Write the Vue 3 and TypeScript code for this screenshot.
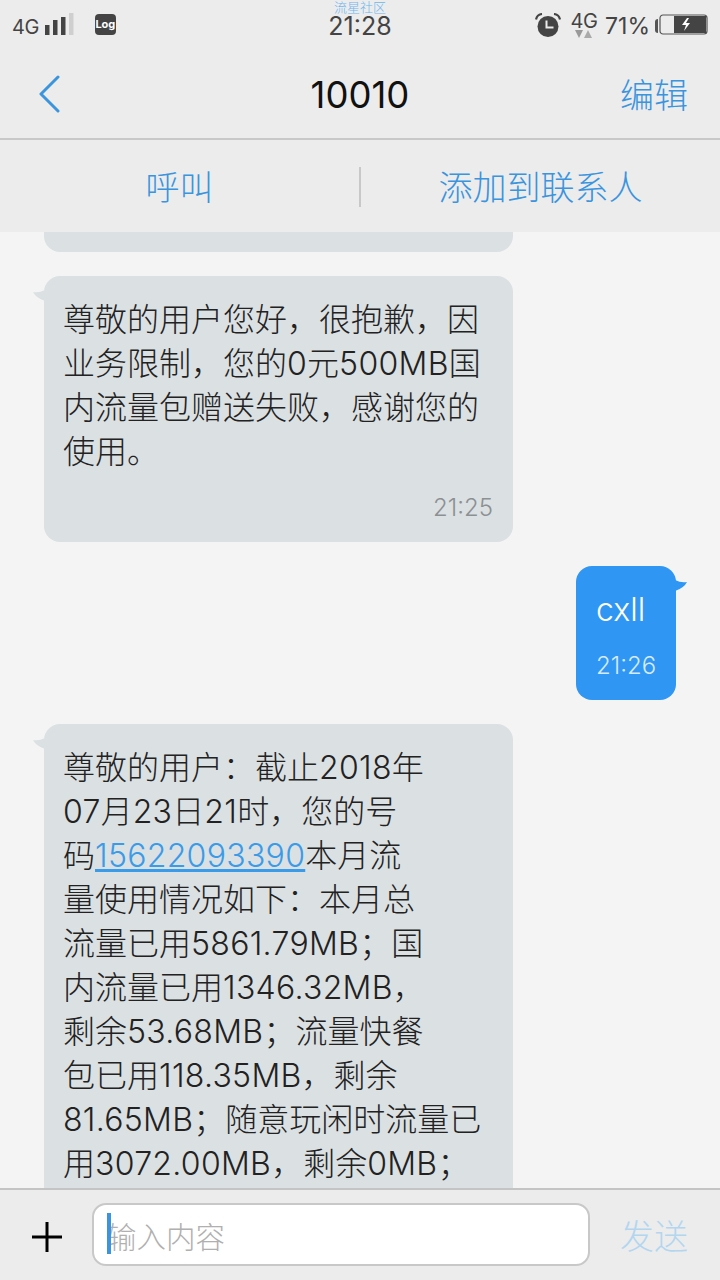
<template>
  <div class="phone">
    <!-- Status bar -->
    <div class="status">
      <div class="status-left">
        <span class="net">4G</span>
        <svg class="signal" width="30" height="24" viewBox="0 0 30 24">
          <rect x="0" y="12" width="4.5" height="10" fill="#444" />
          <rect x="8" y="7" width="4.5" height="15" fill="#444" />
          <rect x="16" y="4" width="4.5" height="18" fill="#444" />
          <rect x="24" y="0" width="4.5" height="22" fill="#cfcfcf" />
        </svg>
        <span class="log">Log</span>
      </div>
      <div class="status-center">
        <span class="carrier">流星社区</span>
        <span class="clock">21:28</span>
      </div>
      <div class="status-right">
        <svg class="alarm" width="26" height="24" viewBox="0 0 26 24">
          <circle cx="13" cy="13.5" r="10.5" fill="#444" />
          <path d="M11.5 7.5v7h7" fill="none" stroke="#ececec" stroke-width="2" />
          <path d="M1 6.5 Q2 1.5 7 1 M25 6.5 Q24 1.5 19 1" fill="none" stroke="#444" stroke-width="2.2" />
        </svg>
        <div class="net-updown">
          <span class="net2">4G</span>
          <svg class="updown" width="20" height="9" viewBox="0 0 20 9">
            <path d="M1 0h8l-4 8z" fill="#999" />
            <path d="M10 8h8l-4-8z" fill="#aaa" />
          </svg>
        </div>
        <span class="pct">71%</span>
        <span class="pct-cut"></span>
        <svg class="battery" width="49" height="21" viewBox="0 0 49 21">
          <rect x="1" y="1" width="47" height="19" rx="3" fill="none" stroke="#555" stroke-width="1.2" />
          <rect x="15" y="2" width="32" height="17" fill="#444" />
          <path d="M28 4l-5 7h4l-2 6 6-8h-4l3-5z" fill="#fff" />
        </svg>
      </div>
    </div>

    <!-- Header -->
    <header class="header">
      <svg class="back" width="24" height="38" viewBox="0 0 24 38">
        <path d="M20 2 L3 19 L20 36" fill="none" stroke="#3a94de" stroke-width="3" stroke-linecap="round" stroke-linejoin="round" />
      </svg>
      <span class="title">10010</span>
      <span class="edit">编辑</span>
    </header>

    <!-- Actions -->
    <div class="actions">
      <span class="action">呼叫</span>
      <span class="sep"></span>
      <span class="action">添加到联系人</span>
    </div>

    <!-- Messages -->
    <main class="messages">
      <div class="bubble cut-top"></div>

      <div class="bubble in first">
        <svg class="tail tail-in" width="12" height="11" viewBox="0 0 12 11">
          <path d="M12 0 Q6 3 0 2 Q3 8 12 11z" fill="#dbe0e3" />
        </svg>
        <p class="body">尊敬的用户您好，很抱歉，因<br />业务限制，您的<span class="lat">0</span>元<span class="lat">500MB</span>国<br />内流量包赠送失败，感谢您的<br />使用。</p>
        <div class="time">21:25</div>
      </div>

      <div class="bubble out">
        <svg class="tail tail-out" width="12" height="11" viewBox="0 0 12 11">
          <path d="M0 0 Q6 3 12 2 Q9 8 0 11z" fill="#2f96f3" />
        </svg>
        <p class="body">cxll</p>
        <div class="time">21:26</div>
      </div>

      <div class="bubble in long">
        <svg class="tail tail-in" width="12" height="11" viewBox="0 0 12 11">
          <path d="M12 0 Q6 3 0 2 Q3 8 12 11z" fill="#dbe0e3" />
        </svg>
        <p class="body">尊敬的用户：截止<span class="lat">2018</span>年<br /><span class="lat">07</span>月<span class="lat">23</span>日<span class="lat">21</span>时，您的号<br />码<span class="link lat">15622093390</span>本月流<br />量使用情况如下：本月总<br />流量已用<span class="lat">5861.79MB</span>；国<br />内流量已用<span class="lat">1346.32MB</span>，<br />剩余<span class="lat">53.68MB</span>；流量快餐<br />包已用<span class="lat">118.35MB</span>，剩余<br /><span class="lat">81.65MB</span>；随意玩闲时流量已<br />用<span class="lat">3072.00MB</span>，剩余<span class="lat">0MB</span>；</p>
      </div>
    </main>

    <!-- Input -->
    <footer class="footer">
      <svg class="plus" width="30" height="30" viewBox="0 0 30 30">
        <path d="M0 15h30M15 0v30" stroke="#000" stroke-width="3" />
      </svg>
      <div class="input">
        <span class="caret"></span>
        <span class="placeholder">输入内容</span>
      </div>
      <span class="send">发送</span>
    </footer>
  </div>
</template>

<script setup lang="ts">
</script>

<style>
html, body { margin: 0; background: #f4f4f4; }
</style>

<style scoped>
.phone {
  width: 720px;
  height: 1280px;
  overflow: hidden;
  display: flex;
  flex-direction: column;
  background: #f4f4f4;
  font-family: "Inter", "Noto Sans CJK SC", sans-serif;
  font-weight: 300;
}

.status {
  height: 50px;
  flex: none;
  display: flex;
  justify-content: space-between;
  background: #ececec;
  color: #444;
  position: relative;
}
.status-left {
  display: flex;
  align-items: flex-start;
  padding: 14px 0 0 12px;
}
.net { font-size: 20px; line-height: 26px; letter-spacing: -0.5px; font-weight: 400; }
.signal { margin: -1px 0 0 6px; }
.log {
  width: 21px;
  height: 21px;
  margin: 0 0 0 20px;
  border-radius: 4px;
  background: #444;
  color: #fff;
  font-size: 11px;
  font-weight: 700;
  line-height: 21px;
  text-align: center;
}
.status-center {
  position: absolute;
  left: 0;
  right: 0;
  top: 0;
  display: flex;
  flex-direction: column;
  align-items: center;
}
.carrier { font-size: 13px; line-height: 14px; color: #6db6ee; }
.clock { margin-top: -1px; font-size: 25px; line-height: 26px; font-weight: 400; }
.status-right {
  display: flex;
  align-items: flex-start;
  padding: 13px 12px 0 0;
}
.alarm { margin-top: 0; }
.net-updown {
  display: flex;
  flex-direction: column;
  align-items: center;
  width: 28px;
  margin: -3px 0 0 9px;
}
.net2 { font-size: 20px; line-height: 22px; letter-spacing: -0.5px; font-weight: 400; }
.updown { margin-top: -2px; }
.pct { font-size: 23px; line-height: 26px; margin-left: 7px; font-weight: 400; }
.pct-cut {
  width: 3px;
  height: 14px;
  margin: 6px 0 0 5px;
  border-radius: 3px 0 0 3px;
  background: #555;
}
.battery { margin: 1px 0 0 1px; }

.header {
  height: 90px;
  flex: none;
  box-sizing: border-box;
  display: flex;
  align-items: center;
  justify-content: space-between;
  padding: 0 32px 0 38px;
  background: #ececec;
  border-bottom: 2px solid #c8c8c8;
  position: relative;
}
.title {
  position: absolute;
  left: 0;
  right: 0;
  margin-top: 2px;
  text-align: center;
  font-size: 36.5px;
  font-weight: 400;
  color: #111;
  pointer-events: none;
}
.edit { margin-top: -2px; font-size: 34px; color: #3a94de; }

.actions {
  height: 92px;
  flex: none;
  box-sizing: border-box;
  padding-bottom: 2px;
  display: flex;
  align-items: center;
  background: #ececec;
}
.action {
  flex: 1;
  text-align: center;
  font-size: 34px;
  color: #3a94de;
}
.sep {
  width: 2px;
  height: 40px;
  margin-top: 3px;
  background: #c8c8c8;
}

.messages {
  flex: 1;
  min-height: 0;
  overflow: hidden;
  display: flex;
  flex-direction: column;
  align-items: flex-start;
  gap: 24px;
}
.bubble {
  position: relative;
  flex: none;
  box-sizing: border-box;
  border-radius: 16px;
}
.cut-top {
  width: 469px;
  height: 20px;
  margin-left: 44px;
  background: #dbe0e3;
  border-radius: 0 0 16px 16px;
}
.in {
  width: 469px;
  margin-left: 44px;
  padding: 22px 20px 19px 19px;
  background: #dbe0e3;
  color: #222;
}
.out {
  width: 100px;
  align-self: flex-end;
  margin-right: 44px;
  padding: 22px 20px 19px;
  background: #2f96f3;
  color: #fff;
}
.long { padding-bottom: 40px; }
.body {
  margin: 0;
  font-size: 32px;
  line-height: 44px;
  white-space: nowrap;
}
.lat { letter-spacing: 0.3px; }
.time {
  margin-top: 19px;
  font-size: 24px;
  line-height: 30px;
  text-align: right;
  color: #8c9093;
}
.out .time { color: #d6ebfd; text-align: left; }
.tail { position: absolute; top: 14px; }
.tail-in { left: -11px; }
.tail-out { right: -11px; }
.link { color: #3a9be8; text-decoration: underline; }

.footer {
  height: 92px;
  flex: none;
  box-sizing: border-box;
  display: flex;
  align-items: center;
  padding: 0 30px 2px 32px;
  background: #ececec;
  border-top: 2px solid #c4c4c4;
}
.plus { flex: none; margin-top: 6px; }
.input {
  width: 498px;
  height: 63px;
  box-sizing: border-box;
  margin-left: 30px;
  display: flex;
  align-items: center;
  padding-left: 13px;
  background: #fff;
  border: 2px solid #c8c8c8;
  border-radius: 14px;
  position: relative;
}
.caret {
  position: absolute;
  left: 13px;
  top: 8px;
  width: 4px;
  height: 41px;
  background: #3a94de;
}
.placeholder { font-size: 29.5px; color: #b0b0b0; margin-top: 2px; }
.send { margin-left: 30px; font-size: 34px; color: #b3d6f0; }
</style>
